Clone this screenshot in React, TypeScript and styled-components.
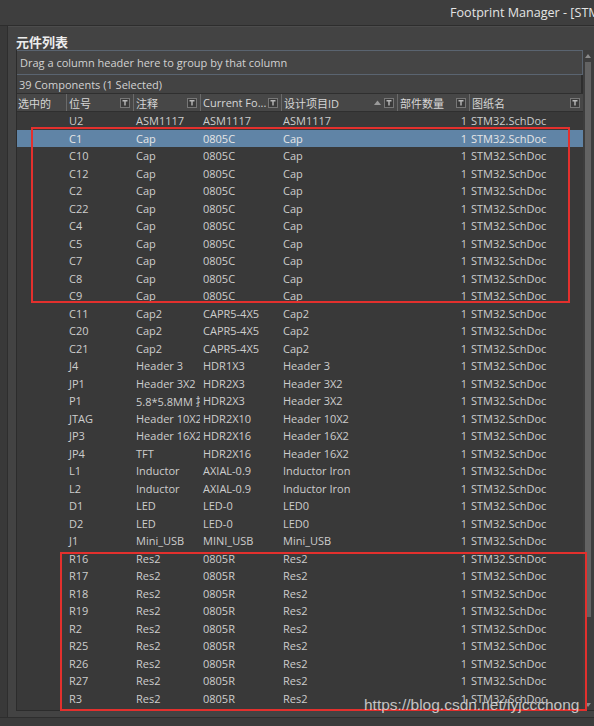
import styled, { createGlobalStyle } from 'styled-components';

const GlobalStyle = createGlobalStyle`
  *, *::before, *::after {
    box-sizing: border-box;
  }
  html, body {
    margin: 0;
    padding: 0;
    background: #3b3b3b;
  }
`;

const COLS = '49px 67px 67px 81px 116px 72px 114px';

const Page = styled.div`
  position: relative;
  width: 594px;
  height: 726px;
  overflow: hidden;
  background: #3b3b3b;
  font-family: "Open Sans", "Noto Sans CJK SC", sans-serif;
  color: #cfcfcf;
`;
const TitleBar = styled.div`
  height: 26px;
  background: #3e3e3e;
  border-bottom: 1px solid #2d2d2d;
  display: flex;
  align-items: center;
  padding-left: 450px;
  white-space: nowrap;
  overflow: hidden;
  color: #e4e4e4;
  font-size: 12.6px;
`;
const Body = styled.div`
  display: flex;
  height: 692px;
  border-bottom: 1px solid #2e2e2e;
`;
const SideStrip = styled.div`
  flex: none;
  width: 8px;
  background: #393939;
  border-right: 1px solid #2e2e2e;
`;
const Panel = styled.div`
  flex: 1;
  min-width: 0;
  background: #434343;
  padding: 6px 0 0 8px;
  border-top: 1px solid #4c4c4c;
`;
const PanelTitle = styled.div`
  height: 17px;
  line-height: 17px;
  font-size: 13px;
  font-weight: bold;
  color: #ececec;
  font-family: "Noto Sans CJK SC", sans-serif;
`;
const GridFrame = styled.div`
  display: flex;
  height: 661px;
  border-bottom: 1px solid #2c2c2c;
`;
const GridMain = styled.div`
  flex: none;
  width: 567px;
  border-left: 1px solid #2c2c2c;
  display: flex;
  flex-direction: column;
`;
const GroupBar = styled.div`
  height: 25px;
  border: 1px solid #5a6470;
  border-left: none;
  background: #454545;
  display: flex;
  align-items: center;
  padding-left: 3px;
  font-size: 11px;
  color: #d2d2d2;
`;
const CountRow = styled.div`
  height: 18px;
  display: flex;
  align-items: center;
  padding-left: 2px;
  font-size: 11px;
  color: #d2d2d2;
  border-right: 2px solid #2e2e2e;
`;
const HeaderRow = styled.div`
  display: grid;
  grid-template-columns: ${COLS};
  height: 19px;
  background: #474747;
  border-top: 1px solid #2f2f2f;
  border-bottom: 1px solid #2f2f2f;
`;
const HeaderCell = styled.div<{ $first?: boolean }>`
  display: flex;
  align-items: center;
  padding-left: ${({ $first }) => ($first ? '1px' : '2px')};
  border-left: ${({ $first }) => ($first ? 'none' : '1px solid #6a6a6a')};
  font-size: 11px;
  color: #d6d6d6;
  white-space: nowrap;
  overflow: hidden;
`;
const HeaderIcons = styled.div`
  margin-left: auto;
  margin-right: 3px;
  display: flex;
  align-items: center;
  gap: 3px;
`;
const Rows = styled.div`
  flex: 1;
  background: #393939;
`;
const Row = styled.div<{ $selected?: boolean }>`
  display: grid;
  grid-template-columns: ${COLS};
  height: 17.5px;
  font-size: 11px;
  background: ${({ $selected }) => ($selected ? '#6084a6' : 'transparent')};
  color: ${({ $selected }) => ($selected ? '#e6e6e6' : '#cdcdcd')};
`;
const Cell = styled.div<{ $pad?: number; $right?: boolean }>`
  display: flex;
  align-items: center;
  justify-content: ${({ $right }) => ($right ? 'flex-end' : 'flex-start')};
  padding-left: ${({ $pad }) => ($pad ?? 3)}px;
  padding-right: ${({ $right }) => ($right ? '2px' : '0')};
  white-space: nowrap;
  overflow: hidden;
`;
const ScrollBar = styled.div`
  flex: none;
  width: 11px;
  background: #3d3d3d;
  display: flex;
  flex-direction: column;
  align-items: flex-start;
  padding-left: 2px;
`;
const ScrollArrow = styled.div`
  height: 11px;
  display: flex;
  align-items: center;
`;
const ScrollThumb = styled.div`
  width: 6px;
  height: 555px;
  background: #636363;
  margin-top: 1px;
`;
const ScrollGap = styled.div`
  flex: 1;
`;
const RedBox = styled.div`
  position: absolute;
  border: 2px solid #e3302d;
  pointer-events: none;
`;
const Watermark = styled.div`
  position: absolute;
  left: 364px;
  top: 696px;
  font-family: "Liberation Sans", Arial, sans-serif;
  font-size: 15.5px;
  color: rgba(235, 235, 235, 0.78);
  white-space: nowrap;
`;

function FilterIcon() {
  return (
    <svg width="10" height="10" viewBox="0 0 10 10">
      <rect x="0.5" y="0.5" width="9" height="9" fill="#3a3a3a" stroke="#777" />
      <path d="M2.5 2.8H7.5M5 2.8V7.5" stroke="#b8b8b8" strokeWidth="1.4" />
    </svg>
  );
}

function SortArrow() {
  return (
    <svg width="7" height="5" viewBox="0 0 7 5">
      <path d="M0 5L3.5 0.5L7 5Z" fill="#9a9a9a" />
    </svg>
  );
}

type Part = [string, string, string, string];

const parts: Part[] = [
  ['U2', 'ASM1117', 'ASM1117', 'ASM1117'],
  ['C1', 'Cap', '0805C', 'Cap'],
  ['C10', 'Cap', '0805C', 'Cap'],
  ['C12', 'Cap', '0805C', 'Cap'],
  ['C2', 'Cap', '0805C', 'Cap'],
  ['C22', 'Cap', '0805C', 'Cap'],
  ['C4', 'Cap', '0805C', 'Cap'],
  ['C5', 'Cap', '0805C', 'Cap'],
  ['C7', 'Cap', '0805C', 'Cap'],
  ['C8', 'Cap', '0805C', 'Cap'],
  ['C9', 'Cap', '0805C', 'Cap'],
  ['C11', 'Cap2', 'CAPR5-4X5', 'Cap2'],
  ['C20', 'Cap2', 'CAPR5-4X5', 'Cap2'],
  ['C21', 'Cap2', 'CAPR5-4X5', 'Cap2'],
  ['J4', 'Header 3', 'HDR1X3', 'Header 3'],
  ['JP1', 'Header 3X2', 'HDR2X3', 'Header 3X2'],
  ['P1', '5.8*5.8MM 按键', 'HDR2X3', 'Header 3X2'],
  ['JTAG', 'Header 10X2', 'HDR2X10', 'Header 10X2'],
  ['JP3', 'Header 16X2', 'HDR2X16', 'Header 16X2'],
  ['JP4', 'TFT', 'HDR2X16', 'Header 16X2'],
  ['L1', 'Inductor', 'AXIAL-0.9', 'Inductor Iron'],
  ['L2', 'Inductor', 'AXIAL-0.9', 'Inductor Iron'],
  ['D1', 'LED', 'LED-0', 'LED0'],
  ['D2', 'LED', 'LED-0', 'LED0'],
  ['J1', 'Mini_USB', 'MINI_USB', 'Mini_USB'],
  ['R16', 'Res2', '0805R', 'Res2'],
  ['R17', 'Res2', '0805R', 'Res2'],
  ['R18', 'Res2', '0805R', 'Res2'],
  ['R19', 'Res2', '0805R', 'Res2'],
  ['R2', 'Res2', '0805R', 'Res2'],
  ['R25', 'Res2', '0805R', 'Res2'],
  ['R26', 'Res2', '0805R', 'Res2'],
  ['R27', 'Res2', '0805R', 'Res2'],
  ['R3', 'Res2', '0805R', 'Res2'],
];

export default function App() {
  return (
    <Page>
      <GlobalStyle />
      <TitleBar>Footprint Manager - [STM32.PrjPcb]</TitleBar>
      <Body>
        <SideStrip />
        <Panel>
          <PanelTitle>元件列表</PanelTitle>
          <GridFrame>
            <GridMain>
              <GroupBar>Drag a column header here to group by that column</GroupBar>
              <CountRow>39 Components (1 Selected)</CountRow>
              <HeaderRow>
                <HeaderCell $first>选中的</HeaderCell>
                <HeaderCell>
                  位号
                  <HeaderIcons><FilterIcon /></HeaderIcons>
                </HeaderCell>
                <HeaderCell>
                  注释
                  <HeaderIcons><FilterIcon /></HeaderIcons>
                </HeaderCell>
                <HeaderCell>
                  Current Fo...
                  <HeaderIcons><FilterIcon /></HeaderIcons>
                </HeaderCell>
                <HeaderCell>
                  设计项目ID
                  <HeaderIcons><SortArrow /><FilterIcon /></HeaderIcons>
                </HeaderCell>
                <HeaderCell>
                  部件数量
                  <HeaderIcons><FilterIcon /></HeaderIcons>
                </HeaderCell>
                <HeaderCell>
                  图纸名
                  <HeaderIcons><FilterIcon /></HeaderIcons>
                </HeaderCell>
              </HeaderRow>
              <Rows>
                {parts.map(([ref, comment, footprint, id]) => (
                  <Row key={ref} $selected={ref === 'C1'}>
                    <Cell />
                    <Cell>{ref}</Cell>
                    <Cell>{comment}</Cell>
                    <Cell>{footprint}</Cell>
                    <Cell $pad={2}>{id}</Cell>
                    <Cell $right>1</Cell>
                    <Cell $pad={2}>STM32.SchDoc</Cell>
                  </Row>
                ))}
              </Rows>
            </GridMain>
            <ScrollBar>
              <ScrollArrow>
                <svg width="6" height="4" viewBox="0 0 6 4"><path d="M0 4L3 0L6 4Z" fill="#8a8a8a" /></svg>
              </ScrollArrow>
              <ScrollThumb />
              <ScrollGap />
              <ScrollArrow>
                <svg width="6" height="4" viewBox="0 0 6 4"><path d="M0 0L3 4L6 0Z" fill="#8a8a8a" /></svg>
              </ScrollArrow>
            </ScrollBar>
          </GridFrame>
        </Panel>
      </Body>
      <RedBox style={{ left: 31, top: 127, width: 539, height: 176 }} />
      <RedBox style={{ left: 60, top: 552, width: 527, height: 159 }} />
      <Watermark>https://blog.csdn.net/lyjccchong</Watermark>
    </Page>
  );
}
